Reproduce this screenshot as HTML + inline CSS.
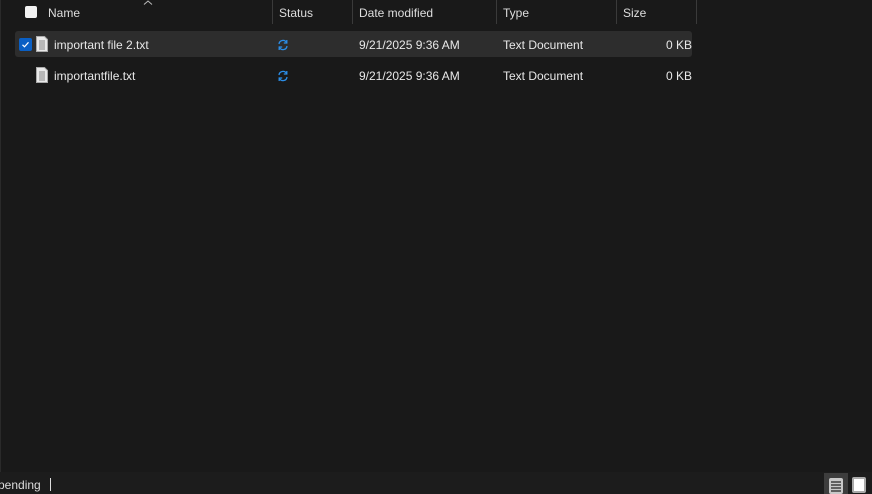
<!DOCTYPE html>
<html><head><style>
body{margin:0;width:872px;height:494px;background:#191919;font-family:"Segoe UI","Liberation Sans",sans-serif;font-size:12px;color:#fff;position:relative;overflow:hidden}
.a{position:absolute;white-space:nowrap}
.sep{position:absolute;top:0;width:1px;height:24px;background:#3a3a3a}
.h{color:#dedede;top:6px}
.row{position:absolute;left:15px;width:677px;height:26px}
.t{color:#e8e8e8}
</style></head><body>
<div class="a" style="left:0;top:0;width:1px;height:472px;background:#2a2a2a"></div>
<div class="a" style="left:25px;top:6px;width:12px;height:12px;background:#f2f2f2;border-radius:2px"></div>
<div class="a h" style="left:48px">Name</div>
<svg class="a" style="left:143px;top:0" width="10" height="5"><path d="M1 4.5l4-3.5 4 3.5" stroke="#bbb" fill="none"/></svg>
<div class="sep" style="left:272px"></div><div class="a h" style="left:279px">Status</div>
<div class="sep" style="left:352px"></div><div class="a h" style="left:359px">Date modified</div>
<div class="sep" style="left:496px"></div><div class="a h" style="left:503px">Type</div>
<div class="sep" style="left:616px"></div><div class="a h" style="left:623px">Size</div>
<div class="sep" style="left:696px"></div>

<div class="row" style="top:31px;background:#2d2d2d;border-radius:3px"></div>
<div class="a" style="left:19px;top:38px;width:13px;height:13px;background:#0a5fc4;border-radius:2px"><svg width="13" height="13"><path d="M3.5 6.8l2 2 4-4.5" stroke="#fff" fill="none" stroke-width="1.2"/></svg></div>
<svg class="a" style="left:36px;top:36px" width="12" height="16"><path d="M0.5 0.5h8l3 3v12h-11z" fill="#e9e9e9" stroke="#aaa"/><path d="M3 5h6M3 7h6M3 9h6M3 11h6M3 13h6" stroke="#888"/></svg>
<div class="a t" style="left:54px;top:38px">important file 2.txt</div>
<svg class="a" style="left:277px;top:39px" width="12" height="12"><path d="M2 5a4 4 0 0 1 7.5-1.5M10 7a4 4 0 0 1-7.5 1.5" stroke="#2b8ee8" fill="none" stroke-width="1.3"/><path d="M9.8 1v3h-3M2.2 11v-3h3" stroke="#2b8ee8" fill="none" stroke-width="1.3"/></svg>
<div class="a t" style="left:359px;top:38px">9/21/2025 9:36 AM</div>
<div class="a t" style="left:503px;top:38px">Text Document</div>
<div class="a t" style="left:666px;top:38px">0 KB</div>

<svg class="a" style="left:36px;top:67px" width="12" height="16"><path d="M0.5 0.5h8l3 3v12h-11z" fill="#e9e9e9" stroke="#aaa"/><path d="M3 5h6M3 7h6M3 9h6M3 11h6M3 13h6" stroke="#888"/></svg>
<div class="a t" style="left:54px;top:69px">importantfile.txt</div>
<svg class="a" style="left:277px;top:70px" width="12" height="12"><path d="M2 5a4 4 0 0 1 7.5-1.5M10 7a4 4 0 0 1-7.5 1.5" stroke="#2b8ee8" fill="none" stroke-width="1.3"/><path d="M9.8 1v3h-3M2.2 11v-3h3" stroke="#2b8ee8" fill="none" stroke-width="1.3"/></svg>
<div class="a t" style="left:359px;top:69px">9/21/2025 9:36 AM</div>
<div class="a t" style="left:503px;top:69px">Text Document</div>
<div class="a t" style="left:666px;top:69px">0 KB</div>

<div class="a" style="left:0;top:472px;width:872px;height:22px;background:#1c1c1c"></div>
<div class="a" style="left:-2px;top:478px;color:#ddd">pending</div>
<div class="a" style="left:50px;top:478px;width:1px;height:13px;background:#ddd"></div>
<div class="a" style="left:824px;top:473px;width:24px;height:21px;background:#3d3d3d"></div>
<div class="a" style="left:829px;top:478px;width:14px;height:16px;background:#c8c8c8;border-radius:2px"></div>
<svg class="a" style="left:829px;top:478px" width="14" height="16"><path d="M2 4h10M2 7h10M2 10h10M2 13h10" stroke="#222" stroke-width="1.3"/></svg>
<div class="a" style="left:852px;top:477px;width:10px;height:12px;background:#fff;border:2px solid #aaa;border-radius:2px"></div>
</body></html>
